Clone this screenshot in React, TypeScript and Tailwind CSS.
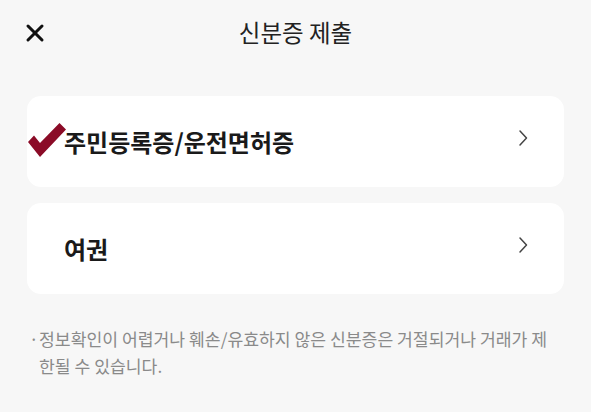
import { X } from 'lucide-react'

const docs = [
  { label: '주민등록증/운전면허증', checked: true },
  { label: '여권', checked: false },
]

function Chevron() {
  return (
    <svg className="mb-[7px]" width="10" height="18" viewBox="0 0 10 18" fill="none">
      <path d="M2 2L8.5 9L2 16" stroke="#444" strokeWidth="1.5" strokeLinecap="round" strokeLinejoin="round" />
    </svg>
  )
}

function Check() {
  return (
    <svg className="absolute left-[1px] top-[27px]" width="38" height="35" viewBox="0 0 38 35">
      <polygon points="0,19 6,12.5 12,20 31.5,0 38,6.5 12,34" fill="#8b0b27" />
    </svg>
  )
}

export default function App() {
  return (
    <div className="w-[591px] h-[412px] bg-[#f7f7f7] font-['Noto_Sans_CJK_KR',sans-serif] text-[#222] overflow-hidden">
      <header className="relative h-[66px] flex items-center justify-center">
        <X className="absolute left-[21px] top-[19px]" size={28} strokeWidth={2.6} color="#111" />
        <h1 className="text-[23.5px] leading-none text-[#222]">신분증 제출</h1>
      </header>

      <div className="px-[27px] pt-[30px] flex flex-col gap-4">
        {docs.map(d => (
          <button
            key={d.label}
            className="relative h-[91px] w-full rounded-[14px] bg-white flex items-center justify-between pl-[37px] pr-[36px] text-left"
          >
            {d.checked && <Check />}
            <span className="text-[24px] font-bold leading-none text-[#1a1a1a]">{d.label}</span>
            <Chevron />
          </button>
        ))}
      </div>

      <p className="mt-[31px] pl-[39px] pr-[18px] relative text-[17.2px] leading-[27px] text-[#8a8a8a]">
        <span className="absolute left-[29px]">·</span>
        정보확인이 어렵거나 훼손/유효하지 않은 신분증은 거절되거나 거래가 제<br />
        한될 수 있습니다.
      </p>
    </div>
  )
}
